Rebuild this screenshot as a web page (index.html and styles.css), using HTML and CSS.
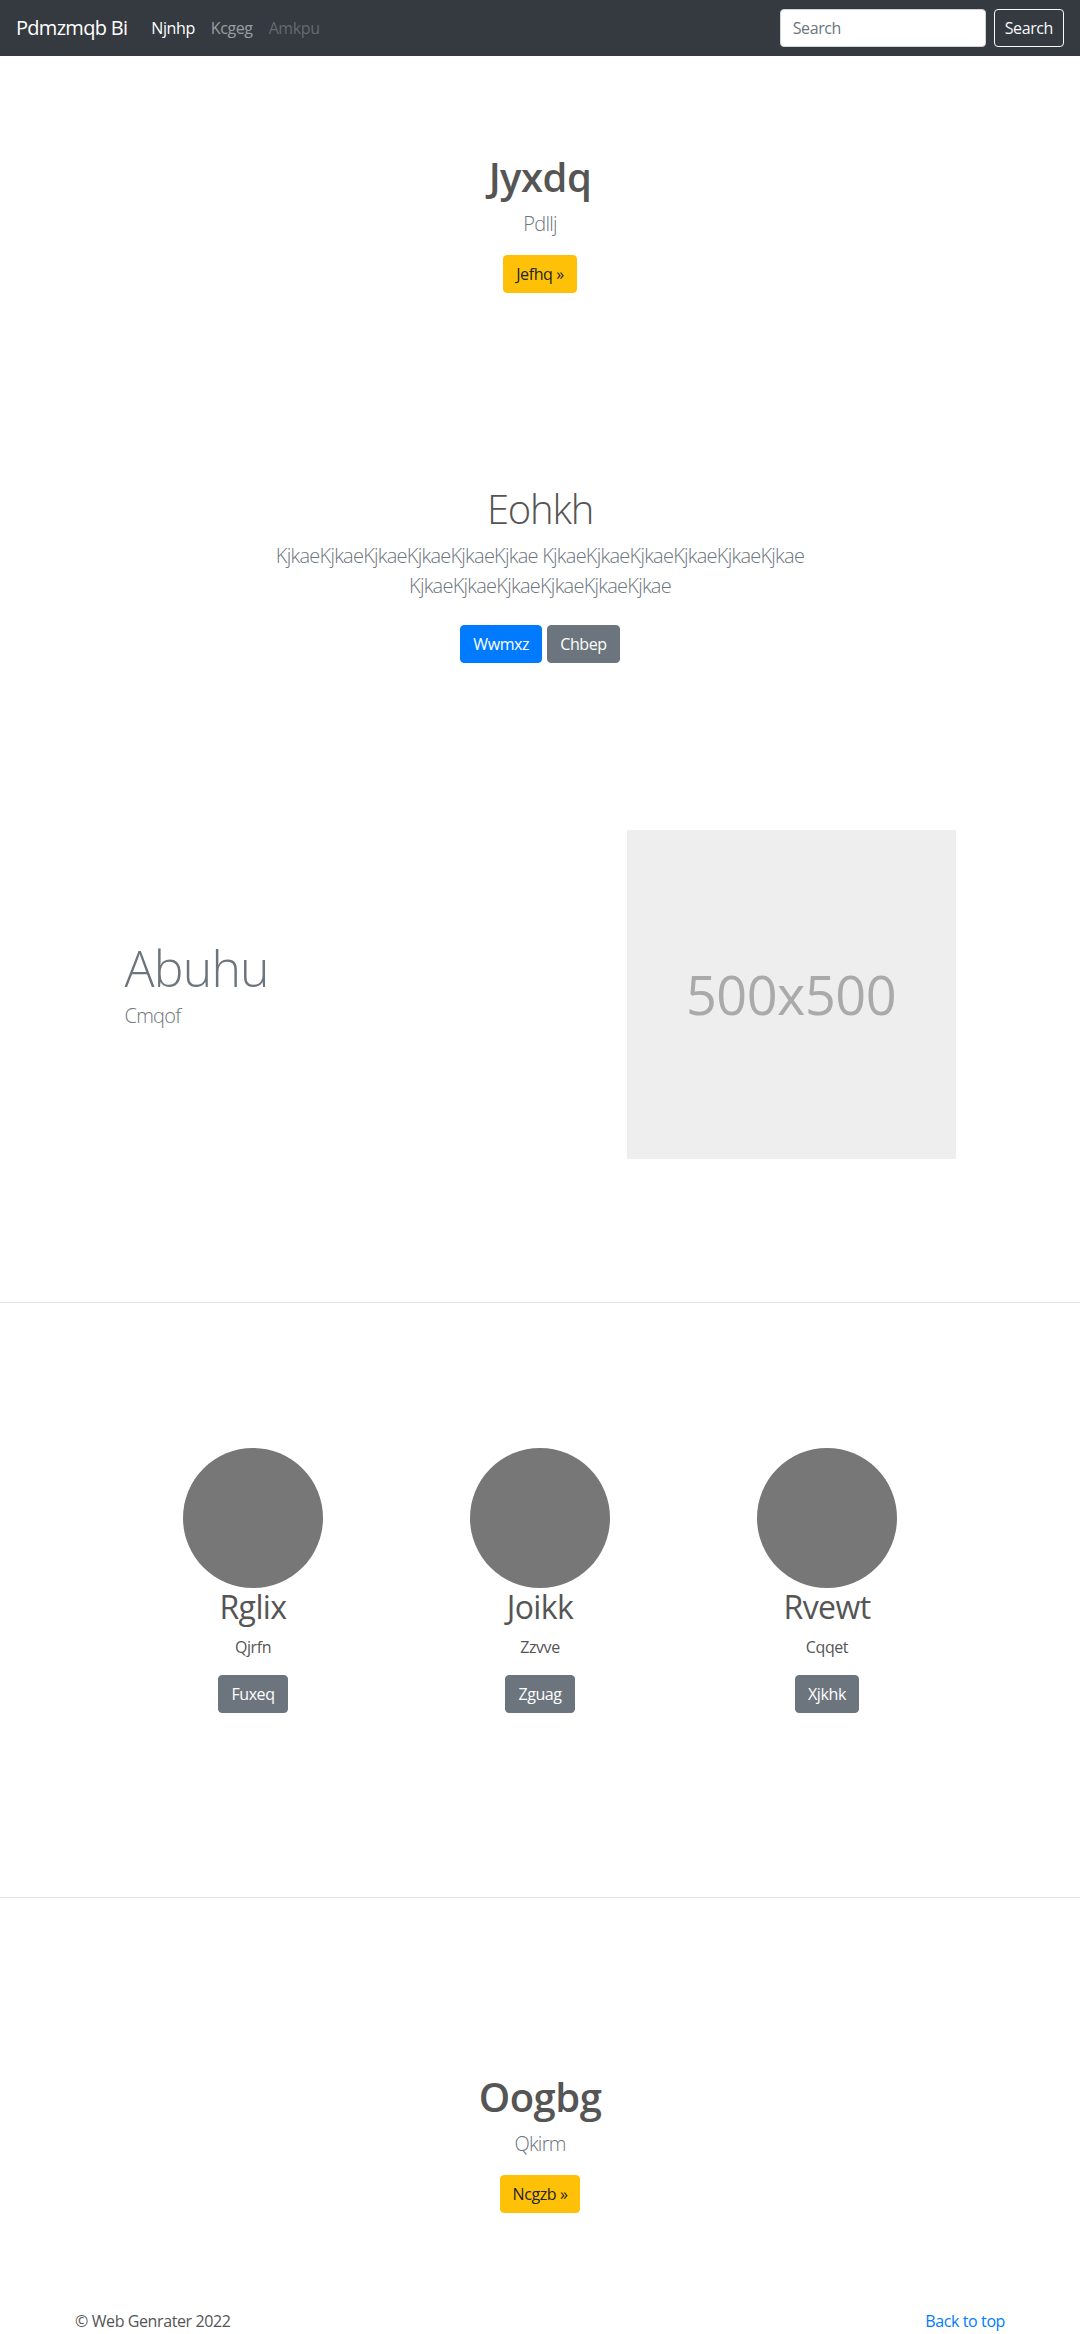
FILE: index.html
```html
<!DOCTYPE html>
<html lang="en">
<head>
<meta charset="utf-8">
<title>Pdmzmqb Bi</title>
<link rel="stylesheet" href="styles.css">
</head>
<body>
<nav class="navbar">
  <a class="brand" href="#">Pdmzmqb Bi</a>
  <ul class="nav-links">
    <li><a class="nav-link active" href="#">Njnhp</a></li>
    <li><a class="nav-link" href="#">Kcgeg</a></li>
    <li><a class="nav-link disabled" href="#">Amkpu</a></li>
  </ul>
  <form class="search">
    <input class="search-input" type="text" placeholder="Search">
    <button class="btn btn-outline-light" type="button">Search</button>
  </form>
</nav>

<main>
  <section class="hero hero-first">
    <h1 class="hero-title bold">Jyxdq</h1>
    <p class="lead">Pdllj</p>
    <a class="btn btn-warning" href="#">Jefhq »</a>
  </section>

  <section class="hero hero-second">
    <h1 class="hero-title light">Eohkh</h1>
    <p class="lead lead-wide">KjkaeKjkaeKjkaeKjkaeKjkaeKjkae KjkaeKjkaeKjkaeKjkaeKjkaeKjkae KjkaeKjkaeKjkaeKjkaeKjkaeKjkae</p>
    <div class="btn-row">
      <a class="btn btn-primary" href="#">Wwmxz</a>
      <a class="btn btn-secondary" href="#">Chbep</a>
    </div>
  </section>

  <section class="featurette">
    <div class="featurette-text">
      <h2 class="featurette-heading">Abuhu</h2>
      <p class="lead">Cmqof</p>
    </div>
    <div class="featurette-media">
      <div class="placeholder">500x500</div>
    </div>
  </section>

  <hr class="divider divider-first">

  <section class="marketing">
    <div class="marketing-col">
      <svg class="avatar" width="140" height="140" viewBox="0 0 140 140"><circle cx="70" cy="70" r="70" fill="#777"/></svg>
      <h2 class="marketing-title">Rglix</h2>
      <p class="marketing-text">Qjrfn</p>
      <a class="btn btn-secondary" href="#">Fuxeq</a>
    </div>
    <div class="marketing-col">
      <svg class="avatar" width="140" height="140" viewBox="0 0 140 140"><circle cx="70" cy="70" r="70" fill="#777"/></svg>
      <h2 class="marketing-title">Joikk</h2>
      <p class="marketing-text">Zzvve</p>
      <a class="btn btn-secondary" href="#">Zguag</a>
    </div>
    <div class="marketing-col">
      <svg class="avatar" width="140" height="140" viewBox="0 0 140 140"><circle cx="70" cy="70" r="70" fill="#777"/></svg>
      <h2 class="marketing-title">Rvewt</h2>
      <p class="marketing-text">Cqqet</p>
      <a class="btn btn-secondary" href="#">Xjkhk</a>
    </div>
  </section>

  <hr class="divider divider-second">

  <section class="hero hero-last">
    <h1 class="hero-title bold">Oogbg</h1>
    <p class="lead">Qkirm</p>
    <a class="btn btn-warning" href="#">Ncgzb »</a>
  </section>
</main>

<footer class="footer">
  <p class="footer-copy">© Web Genrater 2022</p>
  <p class="footer-top"><a href="#">Back to top</a></p>
</footer>
</body>
</html>
```

FILE: styles.css
```css
* { box-sizing: border-box; }

body {
  margin: 0;
  font-family: "Segoe UI", "Open Sans", "Noto Sans", "Liberation Sans", sans-serif;
  font-size: 16px;
  line-height: 1.5;
  letter-spacing: -0.4px;
  color: #555;
  background: #fff;
}

a { text-decoration: none; }

/* Navbar */
.navbar {
  display: flex;
  align-items: center;
  height: 56px;
  padding: 8px 16px;
  background: #343a40;
}
.brand {
  font-size: 20px;
  line-height: 30px;
  letter-spacing: -0.7px;
  padding: 5px 0;
  margin-right: 16px;
  color: #fff;
}
.nav-links {
  display: flex;
  list-style: none;
  margin: 0;
  padding: 0;
}
.nav-link {
  display: block;
  padding: 8px;
  line-height: 24px;
  color: rgba(255,255,255,.5);
}
.nav-link.active { color: #fff; }
.nav-link.disabled { color: rgba(255,255,255,.25); }

.search {
  display: flex;
  align-items: center;
  margin: 0 0 0 auto;
}
.search-input {
  width: 206px;
  height: 38px;
  padding: 6px 12px;
  margin-right: 8px;
  font: inherit;
  font-size: 16px;
  letter-spacing: -0.4px;
  color: #495057;
  background: #fff;
  border: 1px solid #ced4da;
  border-radius: 4px;
}
.search-input::placeholder { color: #6c757d; }

/* Buttons */
.btn {
  display: inline-block;
  font-family: inherit;
  font-size: 16px;
  line-height: 24px;
  letter-spacing: -0.4px;
  padding: 6px 12px;
  border: 1px solid transparent;
  border-radius: 4px;
  text-align: center;
  vertical-align: middle;
  cursor: pointer;
}
.btn-outline-light {
  color: #f8f9fa;
  background: transparent;
  border-color: #f8f9fa;
  padding: 6px 10px;
}
.btn-warning { color: #212529; background: #ffc107; border-color: #ffc107; }
.btn-primary { color: #fff; background: #007bff; border-color: #007bff; }
.btn-secondary { color: #fff; background: #6c757d; border-color: #6c757d; }

/* Hero sections */
.hero { text-align: center; }
.hero-first { padding-top: 97px; }
.hero-second { padding-top: 192px; }
.hero-last { padding-top: 175px; }

.hero-title {
  margin: 0 0 8px;
  font-size: 40px;
  line-height: 1.2;
  color: #555;
}
.hero-title.bold { font-weight: 600; letter-spacing: -0.5px; }
.hero-title.light { font-weight: 300; letter-spacing: -1.2px; }

.lead {
  margin: 0 0 16px;
  font-size: 20px;
  line-height: 30px;
  font-weight: 300;
  letter-spacing: -0.75px;
  color: #6c757d;
}
.lead-wide {
  max-width: 610px;
  margin-left: auto;
  margin-right: auto;
}
.btn-row {
  display: flex;
  justify-content: center;
  gap: 5px;
  padding-top: 8px;
}

/* Featurette */
.featurette {
  display: grid;
  grid-template-columns: 502px 359px;
  align-items: center;
  width: 861px;
  margin: 167px auto 0;
}
.featurette-text, .featurette-media { padding: 0 15px; }
.featurette-heading {
  margin: 0 0 8px;
  font-size: 50px;
  line-height: 1;
  font-weight: 300;
  letter-spacing: -0.8px;
  color: #6c757d;
}
.placeholder {
  display: flex;
  align-items: center;
  justify-content: center;
  width: 329px;
  height: 329px;
  background: #eee;
  color: #aaa;
  font-size: 54px;
  font-weight: 400;
  letter-spacing: -0.5px;
}

/* Dividers */
.divider {
  margin: 0;
  border: 0;
  border-top: 1px solid rgba(0,0,0,.1);
}
.divider-first { margin-top: 143px; }
.divider-second { margin-top: 184px; }

/* Marketing */
.marketing {
  display: grid;
  grid-template-columns: repeat(3, 1fr);
  width: 861px;
  margin: 145px auto 0;
  text-align: center;
}
.avatar {
  display: block;
  margin: 0 auto;
}
.marketing-title {
  margin: 0 0 9px;
  font-size: 32px;
  line-height: 1.2;
  font-weight: 400;
  letter-spacing: -0.6px;
  color: #555;
}
.marketing-text {
  margin: 0 0 16px;
  color: #555;
}

/* Footer */
.footer {
  display: flex;
  justify-content: space-between;
  width: 930px;
  margin: 96px auto 0;
  padding-bottom: 32px;
}
.footer p { margin: 0 0 16px; }
.footer-top a { color: #007bff; }
```
